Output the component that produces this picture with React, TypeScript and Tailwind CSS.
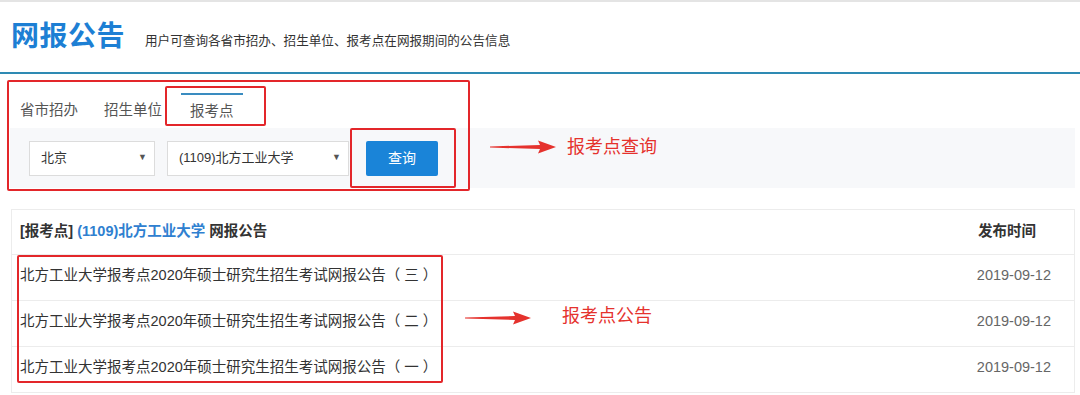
const rows = [
  { title: "北方工业大学报考点2020年硕士研究生招生考试网报公告（ 三 ）", date: "2019-09-12" },
  { title: "北方工业大学报考点2020年硕士研究生招生考试网报公告（ 二 ）", date: "2019-09-12" },
  { title: "北方工业大学报考点2020年硕士研究生招生考试网报公告（ 一 ）", date: "2019-09-12" },
];

function Arrow({ className }: { className: string }) {
  return (
    <svg className={className} width="66" height="14" viewBox="0 0 66 14">
      <polygon points="0,6.4 50,5 48,0.5 66,7 48,13.5 50,9 0,7.6" fill="#e5322d" />
    </svg>
  );
}

function Select({ label, width }: { label: string; width: string }) {
  return (
    <div
      className={`flex h-[35px] ${width} items-center justify-between border border-[#dcdcdc] bg-white pl-[11px] pr-[7px] text-[13px] text-[#333]`}
    >
      <span>{label}</span>
      <span className="text-[9px] text-[#555]">▼</span>
    </div>
  );
}

export default function App() {
  return (
    <div
      className="relative h-[395px] w-[1080px] overflow-hidden bg-white"
      style={{ fontFamily: '"Liberation Sans", "Noto Sans CJK SC", sans-serif' }}
    >
      <div className="h-[2px] bg-[#e4e4e4]" />
      <header className="flex h-[70px] items-center pl-[11px]">
        <h1 className="text-[28px] font-bold tracking-[0.5px] text-[#1d7fd4]">网报公告</h1>
        <p className="ml-[20px] mt-[9px] text-[12.6px] text-[#333]">
          用户可查询各省市招办、招生单位、报考点在网报期间的公告信息
        </p>
      </header>
      <div className="h-[2px] bg-[#2e8ab3]" />

      <section className="pl-[10px] pr-[5px]">
        <div className="flex h-[54px] items-end text-[14.5px] text-[#555]">
          <div className="ml-[10px] flex h-[35px] items-center">省市招办</div>
          <div className="ml-[26px] flex h-[35px] items-center">招生单位</div>
          <div className="ml-[19px] flex h-[35px] items-center border-t-2 border-[#3a8cc0] bg-white px-[9px]">
            报考点
          </div>
        </div>
        <div className="flex h-[60px] items-center gap-[12px] bg-[#f7f8fa] pl-[19px]">
          <Select label="北京" width="w-[126px]" />
          <Select label="(1109)北方工业大学" width="w-[182px]" />
          <button className="ml-[5px] h-[35px] w-[72px] rounded-[2px] bg-[#1a84d8] text-[14px] text-white">
            查询
          </button>
        </div>
      </section>

      <div className="ml-[11px] mt-[21px] w-[1064px] border border-[#ececec] text-[14.5px] text-[#333]">
        <div className="flex h-[44px] items-center justify-between pl-[8px] pr-[38px] font-bold">
          <div>
            [报考点] <span className="text-[#2f80d0]">(1109)北方工业大学</span> 网报公告
          </div>
          <div>发布时间</div>
        </div>
        {rows.map((row) => (
          <div
            key={row.title}
            className="flex h-[46px] items-center justify-between border-t border-[#ececec] pb-[3px] pl-[8px] pr-[23px]"
          >
            <div>{row.title}</div>
            <div className="text-[#666]">{row.date}</div>
          </div>
        ))}
      </div>

      {/* annotations */}
      <div className="absolute left-[7px] top-[80px] h-[111px] w-[463px] rounded-[2px] border-2 border-[#e3262a]" />
      <div className="absolute left-[165px] top-[86px] h-[40px] w-[101px] rounded-[2px] border-2 border-[#e3262a]" />
      <div className="absolute left-[350px] top-[128px] h-[60px] w-[106px] rounded-[2px] border-2 border-[#e3262a]" />
      <div className="absolute left-[17px] top-[255px] h-[128px] w-[426px] rounded-[2px] border-2 border-[#e3262a]" />

      <Arrow className="absolute left-[490px] top-[140px]" />
      <div className="absolute left-[567px] top-[134px] text-[18px] leading-[26px] text-[#e5322d]">报考点查询</div>
      <Arrow className="absolute left-[465px] top-[311px]" />
      <div className="absolute left-[562px] top-[303px] text-[18px] leading-[26px] text-[#e5322d]">报考点公告</div>
    </div>
  );
}
